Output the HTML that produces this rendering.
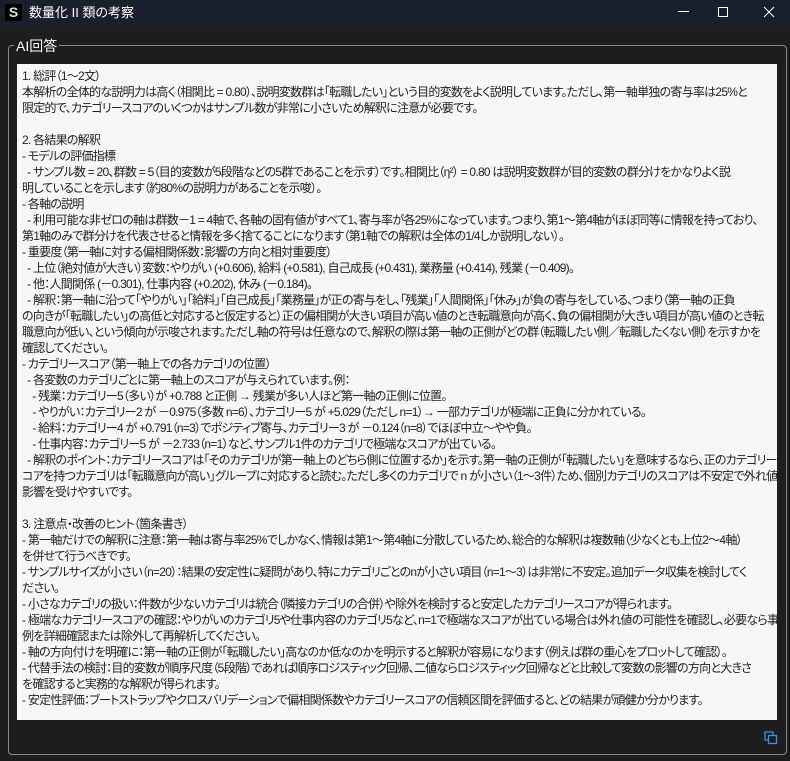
<!DOCTYPE html>
<html><head><meta charset="utf-8"><style>
*{margin:0;padding:0;box-sizing:border-box}
body{width:790px;height:761px;background:#1e1e1e;position:relative;overflow:hidden;font-family:"Liberation Sans","Noto Sans CJK JP",sans-serif}
.tb{position:absolute;left:0;top:0;width:790px;height:27px;background:#1a1f2e;color:#fff}
.logo{position:absolute;left:5px;top:4px;width:17px;height:17px;background:#000;border-radius:2px;color:#ddd;font-size:14px;line-height:17px;text-align:center;font-weight:bold}
.title{position:absolute;left:29px;top:4px;font-size:13px;line-height:18px;font-feature-settings:"palt"}
.frame{position:absolute;left:8px;top:45px;width:779px;height:710px;border:1px solid #8a8a8a;border-radius:4px}
.legend{position:absolute;left:14px;top:37px;background:#1e1e1e;color:#fff;font-size:14px;padding:0 2px;line-height:18px}
.ta{position:absolute;left:17px;top:64px;width:760px;height:656px;background:#f8f7f5;color:#222;font-size:12px;line-height:16px;padding:4px 5px;white-space:pre;overflow:hidden;letter-spacing:-0.75px;font-feature-settings:"palt"}
.copy{position:absolute;left:764px;top:731px}
</style></head><body>
<div class="tb"><div class="logo">S</div><div class="title">数量化 II 類の考察</div>
<svg style="position:absolute;left:675px;top:6px" width="100" height="16"><line x1="3" y1="5.5" x2="14" y2="5.5" stroke="#fff"/><rect x="43.5" y="1.5" width="9" height="9" fill="none" stroke="#fff"/><path d="M89 1L99 11M99 1L89 11" stroke="#fff"/></svg>
</div>
<div class="frame"></div>
<div class="legend">AI回答</div>
<div class="ta">1. 総評（1～2文）
本解析の全体的な説明力は高く（相関比 = 0.80）、説明変数群は「転職したい」という目的変数をよく説明しています。ただし、第一軸単独の寄与率は25%と
限定的で、カテゴリースコアのいくつかはサンプル数が非常に小さいため解釈に注意が必要です。

2. 各結果の解釈
- モデルの評価指標
  - サンプル数 = 20、群数 = 5（目的変数が5段階などの5群であることを示す）です。相関比（η²） = 0.80 は説明変数群が目的変数の群分けをかなりよく説
明していることを示します（約80%の説明力があることを示唆）。
- 各軸の説明
  - 利用可能な非ゼロの軸は群数－1 = 4軸で、各軸の固有値がすべて1、寄与率が各25%になっています。つまり、第1～第4軸がほぼ同等に情報を持っており、
第1軸のみで群分けを代表させると情報を多く捨てることになります（第1軸での解釈は全体の1/4しか説明しない）。
- 重要度（第一軸に対する偏相関係数：影響の方向と相対重要度）
  - 上位（絶対値が大きい）変数：やりがい (+0.606), 給料 (+0.581), 自己成長 (+0.431), 業務量 (+0.414), 残業 (－0.409)。
  - 他：人間関係 (－0.301), 仕事内容 (+0.202), 休み (－0.184)。
  - 解釈：第一軸に沿って「やりがい」「給料」「自己成長」「業務量」が正の寄与をし、「残業」「人間関係」「休み」が負の寄与をしている、つまり（第一軸の正負
の向きが「転職したい」の高低と対応すると仮定すると）正の偏相関が大きい項目が高い値のとき転職意向が高く、負の偏相関が大きい項目が高い値のとき転
職意向が低い、という傾向が示唆されます。ただし軸の符号は任意なので、解釈の際は第一軸の正側がどの群（転職したい側／転職したくない側）を示すかを
確認してください。
- カテゴリースコア（第一軸上での各カテゴリの位置）
  - 各変数のカテゴリごとに第一軸上のスコアが与えられています。例：
    - 残業：カテゴリー5（多い）が +0.788 と正側 → 残業が多い人ほど第一軸の正側に位置。
    - やりがい：カテゴリー2 が －0.975（多数 n=6）、カテゴリー5 が +5.029（ただし n=1）→ 一部カテゴリが極端に正負に分かれている。
    - 給料：カテゴリー4 が +0.791（n=3）でポジティブ寄与、カテゴリー3 が －0.124（n=8）でほぼ中立～やや負。
    - 仕事内容：カテゴリー5 が －2.733（n=1）など、サンプル1件のカテゴリで極端なスコアが出ている。
  - 解釈のポイント：カテゴリースコアは「そのカテゴリが第一軸上のどちら側に位置するか」を示す。第一軸の正側が「転職したい」を意味するなら、正のカテゴリース
コアを持つカテゴリは「転職意向が高い」グループに対応すると読む。ただし多くのカテゴリで n が小さい（1～3件）ため、個別カテゴリのスコアは不安定で外れ値の
影響を受けやすいです。

3. 注意点・改善のヒント（箇条書き）
- 第一軸だけでの解釈に注意：第一軸は寄与率25%でしかなく、情報は第1～第4軸に分散しているため、総合的な解釈は複数軸（少なくとも上位2～4軸）
を併せて行うべきです。
- サンプルサイズが小さい（n=20）：結果の安定性に疑問があり、特にカテゴリごとのnが小さい項目（n=1～3）は非常に不安定。追加データ収集を検討してく
ださい。
- 小さなカテゴリの扱い：件数が少ないカテゴリは統合（隣接カテゴリの合併）や除外を検討すると安定したカテゴリースコアが得られます。
- 極端なカテゴリースコアの確認：やりがいのカテゴリ5や仕事内容のカテゴリ5など、n=1で極端なスコアが出ている場合は外れ値の可能性を確認し、必要なら事
例を詳細確認または除外して再解析してください。
- 軸の方向付けを明確に：第一軸の正側が「転職したい」高なのか低なのかを明示すると解釈が容易になります（例えば群の重心をプロットして確認）。
- 代替手法の検討：目的変数が順序尺度（5段階）であれば順序ロジスティック回帰、二値ならロジスティック回帰などと比較して変数の影響の方向と大きさ
を確認すると実務的な解釈が得られます。
- 安定性評価：ブートストラップやクロスバリデーションで偏相関係数やカテゴリースコアの信頼区間を評価すると、どの結果が頑健か分かります。</div>
<svg class="copy" width="14" height="14"><rect x="1" y="1" width="8" height="8" fill="none" stroke="#3b8eea" stroke-width="1.3"/><rect x="4.5" y="4.5" width="8" height="8" fill="#1e1e1e" stroke="#3b8eea" stroke-width="1.3"/></svg>
</body></html>
